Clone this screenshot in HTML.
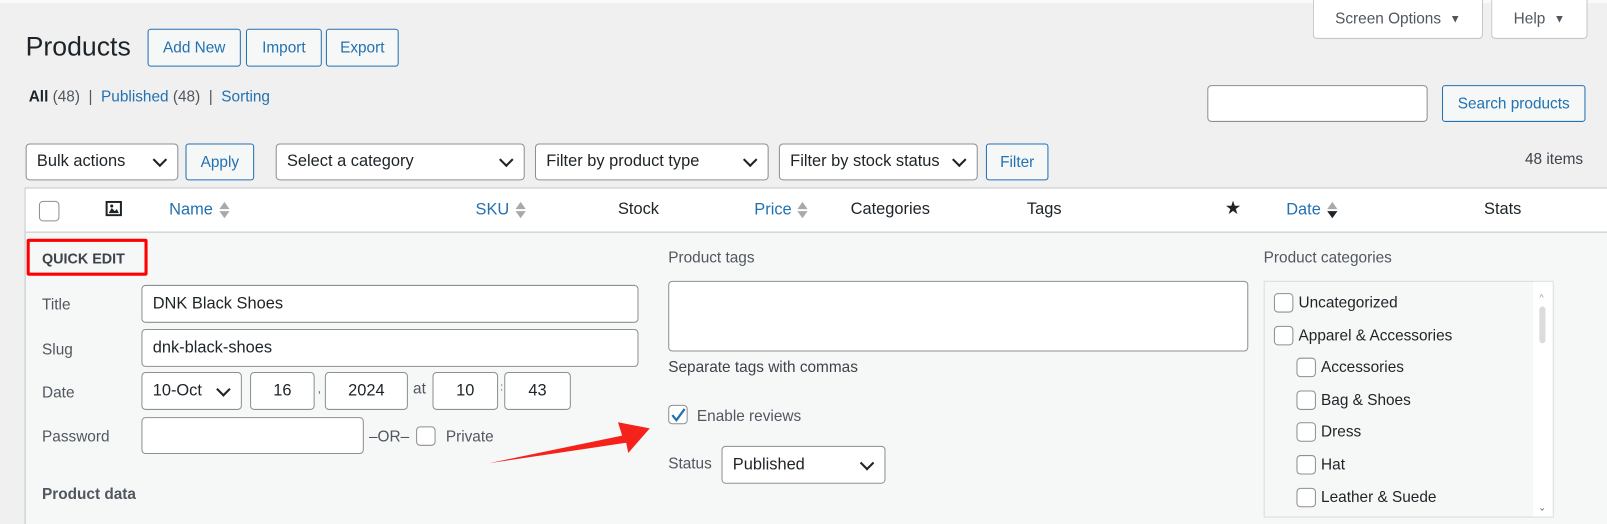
<!DOCTYPE html>
<html><head><style>
*{box-sizing:border-box;margin:0;padding:0}
html,body{width:1607px;height:524px;overflow:hidden;background:#f0f0f1}
#w{width:1568px;height:512px;transform:scale(1.02487);transform-origin:0 0;position:relative;font-family:"Liberation Sans",sans-serif;color:#1d2327;font-size:15px}
.a{position:absolute;white-space:nowrap}
.btn{position:absolute;border:1px solid #2271b1;border-radius:3px;background:#f6f7f7;color:#2271b1;font-size:15px;display:flex;align-items:center;justify-content:center;white-space:nowrap}
.inp{position:absolute;border:1px solid #8c8f94;border-radius:4px;background:#fff;font-size:16px;display:flex;align-items:center;padding-left:10px;color:#1d2327;white-space:nowrap}
.sel::after{content:"";position:absolute;right:12px;top:50%;width:8px;height:8px;border-right:2px solid #1d2327;border-bottom:2px solid #1d2327;transform:translateY(-70%) rotate(45deg)}
.cb{position:absolute;width:19px;height:19px;border:1px solid #8c8f94;border-radius:4px;background:#fff}
.lbl{position:absolute;color:#50575e;font-size:15px;white-space:nowrap}
.blue{color:#2271b1}
.sort{display:inline-block;vertical-align:middle;margin-left:6px;width:10px;height:18px;position:relative}
.sort::before{content:"";position:absolute;top:1px;left:0;border:5px solid transparent;border-bottom:7px solid #a7aaad;border-top:0}
.sort::after{content:"";position:absolute;bottom:1px;left:0;border:5px solid transparent;border-top:7px solid #a7aaad;border-bottom:0}
.sort.d::after{border-top-color:#1d2327}
</style></head><body><div id="w">
<div class="a" style="left:0;top:0;width:1568px;height:3px;background:#fafafa"></div>
<div class="a" style="left:25px;top:30px;font-size:26px;color:#1d2327">Products</div>
<div class="btn" style="left:144px;top:28px;width:91px;height:37px">Add New</div>
<div class="btn" style="left:240px;top:28px;width:74px;height:37px">Import</div>
<div class="btn" style="left:318px;top:28px;width:71px;height:37px">Export</div>
<div class="a" style="left:28px;top:86px;font-size:15px;color:#50575e"><b style="color:#1d2327">All</b> (48) &nbsp;| &nbsp;<span class="blue">Published</span> (48) &nbsp;| &nbsp;<span class="blue">Sorting</span></div>
<div class="a" style="left:1281px;top:0;width:166px;height:38px;background:#fff;border:1px solid #c3c4c7;border-top:none;border-radius:0 0 4px 4px;color:#50575e;display:flex;align-items:center;justify-content:center">Screen Options&nbsp;&nbsp;<span style="font-size:11px">▼</span></div>
<div class="a" style="left:1455px;top:0;width:94px;height:38px;background:#fff;border:1px solid #c3c4c7;border-top:none;border-radius:0 0 4px 4px;color:#50575e;display:flex;align-items:center;justify-content:center">Help&nbsp;&nbsp;<span style="font-size:11px">▼</span></div>
<div class="inp" style="left:1178px;top:83px;width:215px;height:36px"></div>
<div class="btn" style="left:1407px;top:83px;width:140px;height:36px">Search products</div>
<div class="inp sel" style="left:25px;top:140px;width:149px;height:36px">Bulk actions</div>
<div class="btn" style="left:181px;top:140px;width:67px;height:36px">Apply</div>
<div class="inp sel" style="left:269px;top:140px;width:243px;height:36px">Select a category</div>
<div class="inp sel" style="left:522px;top:140px;width:228px;height:36px">Filter by product type</div>
<div class="inp sel" style="left:760px;top:140px;width:194px;height:36px">Filter by stock status</div>
<div class="btn" style="left:962px;top:140px;width:61px;height:36px">Filter</div>
<div class="a" style="left:1488px;top:147px;color:#3c434a">48 items</div>
<div class="a" style="left:24px;top:183px;width:1561px;height:341px;border:1px solid #c3c4c7;background:#f6f7f7"></div>
<div class="a" style="left:25px;top:184px;width:1559px;height:43px;background:#fff;border-bottom:1px solid #c3c4c7"></div>
<div class="cb" style="left:38px;top:196px;width:20px;height:20px"></div>
<svg class="a" style="left:103px;top:196px" width="16" height="15" viewBox="0 0 16 15"><rect x="0" y="0" width="16" height="15" fill="#1d2327"/><rect x="2" y="2" width="12" height="11" fill="#fff"/><path d="M3 12 L6 7 L9 10 L11 8 L13 12 Z" fill="#1d2327"/><circle cx="6" cy="5" r="1.5" fill="#1d2327"/></svg>
<div class="a blue" style="left:165px;top:196px;font-size:16px">Name<span class="sort"></span></div>
<div class="a blue" style="left:464px;top:196px;font-size:16px">SKU<span class="sort"></span></div>
<div class="a" style="left:603px;top:196px;font-size:16px">Stock</div>
<div class="a blue" style="left:736px;top:196px;font-size:16px">Price<span class="sort"></span></div>
<div class="a" style="left:830px;top:196px;font-size:16px">Categories</div>
<div class="a" style="left:1002px;top:196px;font-size:16px">Tags</div>
<div class="a" style="left:1195px;top:193px;font-size:18px">★</div>
<div class="a blue" style="left:1255px;top:196px;font-size:16px">Date<span class="sort d"></span></div>
<div class="a" style="left:1448px;top:196px;font-size:16px">Stats</div>
<div class="a" style="left:26px;top:233px;width:118px;height:36px;border:3px solid #f00;border-radius:2px"></div>
<div class="a" style="left:41px;top:244px;font-size:14px;font-weight:bold;color:#3c434a">QUICK EDIT</div>
<div class="lbl" style="left:41px;top:289px">Title</div>
<div class="inp" style="left:138px;top:278px;width:485px;height:37px">DNK Black Shoes</div>
<div class="lbl" style="left:41px;top:333px">Slug</div>
<div class="inp" style="left:138px;top:321px;width:485px;height:37px">dnk-black-shoes</div>
<div class="lbl" style="left:41px;top:375px">Date</div>
<div class="inp sel" style="left:138px;top:363px;width:98px;height:37px">10-Oct</div>
<div class="inp" style="left:244px;top:363px;width:63px;height:37px;justify-content:center;padding:0">16</div>
<div class="a" style="left:310px;top:374px;color:#50575e;font-size:11px">,</div>
<div class="inp" style="left:317px;top:363px;width:81px;height:37px;justify-content:center;padding:0">2024</div>
<div class="lbl" style="left:403px;top:371px">at</div>
<div class="inp" style="left:422px;top:363px;width:64px;height:37px;justify-content:center;padding:0">10</div>
<div class="a" style="left:488px;top:372px;color:#50575e;font-size:11px">:</div>
<div class="inp" style="left:492px;top:363px;width:65px;height:37px;justify-content:center;padding:0">43</div>
<div class="lbl" style="left:41px;top:418px">Password</div>
<div class="inp" style="left:138px;top:407px;width:217px;height:36px"></div>
<div class="lbl" style="left:360px;top:418px">–OR–</div>
<div class="cb" style="left:406px;top:416px"></div>
<div class="lbl" style="left:435px;top:418px">Private</div>
<div class="a" style="left:41px;top:474px;font-size:15px;font-weight:bold;color:#50575e">Product data</div>
<div class="lbl" style="left:652px;top:243px">Product tags</div>
<div class="a" style="left:652px;top:274px;width:566px;height:69px;border:1px solid #8c8f94;border-radius:4px;background:#fff"></div>
<div class="lbl" style="left:652px;top:350px;color:#3c434a">Separate tags with commas</div>
<div class="cb" style="left:652px;top:395px"></div>
<svg class="a" style="left:654px;top:397px" width="16" height="16" viewBox="0 0 16 16"><path d="M2 8 L6 13 L14 2" fill="none" stroke="#2271b1" stroke-width="2.2"/></svg>
<div class="lbl" style="left:680px;top:398px">Enable reviews</div>
<div class="lbl" style="left:652px;top:444px">Status</div>
<div class="inp sel" style="left:704px;top:435px;width:160px;height:37px">Published</div>
<svg class="a" style="left:455px;top:400px" width="185" height="60" viewBox="0 0 185 60"><path d="M22 52 L152 25 L148 12 L179 18 L158 42 L156 32 Z" fill="#f5221b"/></svg>
<div class="lbl" style="left:1233px;top:243px">Product categories</div>
<div class="a" style="left:1233px;top:274px;width:283px;height:231px;border:1px solid #dcdcde;background:#f6f7f7"></div>
<div class="a" style="left:1496px;top:275px;width:19px;height:229px;background:#fff"></div>
<div class="a" style="left:1502px;top:299px;width:6px;height:36px;background:#dcdcde;border-radius:3px"></div>
<div class="a" style="left:1502px;top:285px;font-size:9px;color:#999">^</div>
<div class="a" style="left:1501px;top:490px;font-size:9px;color:#555">⌄</div>
<div class="cb" style="left:1243px;top:286px"></div><div class="a" style="left:1267px;top:287px">Uncategorized</div>
<div class="cb" style="left:1243px;top:318px"></div><div class="a" style="left:1267px;top:319px">Apparel &amp; Accessories</div>
<div class="cb" style="left:1265px;top:349px"></div><div class="a" style="left:1289px;top:350px">Accessories</div>
<div class="cb" style="left:1265px;top:381px"></div><div class="a" style="left:1289px;top:382px">Bag &amp; Shoes</div>
<div class="cb" style="left:1265px;top:412px"></div><div class="a" style="left:1289px;top:413px">Dress</div>
<div class="cb" style="left:1265px;top:444px"></div><div class="a" style="left:1289px;top:445px">Hat</div>
<div class="cb" style="left:1265px;top:476px"></div><div class="a" style="left:1289px;top:477px">Leather &amp; Suede</div>
</div></body></html>
